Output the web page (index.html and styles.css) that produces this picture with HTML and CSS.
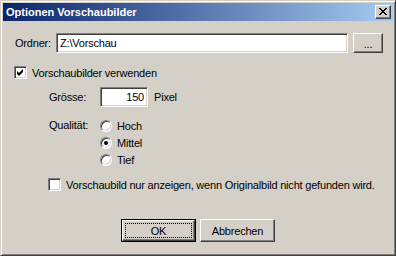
FILE: index.html
```html
<!DOCTYPE html>
<html lang="de">
<head>
    <meta charset="UTF-8">
    <title>Optionen Vorschaubilder</title>
    <link rel="stylesheet" href="styles.css">
</head>
<body>

    <div class="window">
        <div class="titlebar">
            <span class="title">Optionen Vorschaubilder</span>
            <div class="close">
                <svg width="8" height="7" viewBox="0 0 8 7">
                    <path d="M0 0h2v1h1v1h2v-1h1v-1h2v1h-1v1h-1v1h-1v1h1v1h1v1h1v1h-2v-1h-1v-1h-2v1h-1v1h-2v-1h1v-1h1v-1h1v-1h-1v-1h-1v-1h-1z" fill="#000"/>
                </svg>
            </div>
        </div>

        <div class="content">
            <div class="folder-row">
                <span class="label">Ordner:</span>
                <div class="field folder">Z:\Vorschau</div>
                <div class="btn browse">...</div>
            </div>

            <div class="check-row first">
                <span class="checkbox">
                    <svg width="7" height="7" viewBox="0 0 7 7">
                        <path d="M6 0v3l-4 4l-2-2v-3l2 2z" fill="#000"/>
                    </svg>
                </span>
                <span>Vorschaubilder verwenden</span>
            </div>

            <div class="options">
                <div class="size-row">
                    <span class="label sub">Grösse:</span>
                    <div class="field num">150</div>
                    <span class="unit">Pixel</span>
                </div>

                <div class="quality">
                    <span class="label sub">Qualität:</span>
                    <div class="radios">
                        <div class="radio-row"><span class="radio"></span>Hoch</div>
                        <div class="radio-row"><span class="radio on"></span>Mittel</div>
                        <div class="radio-row"><span class="radio"></span>Tief</div>
                    </div>
                </div>

                <div class="check-row second">
                    <span class="checkbox"></span>
                    <span>Vorschaubild nur anzeigen, wenn Originalbild nicht gefunden wird.</span>
                </div>
            </div>

            <div class="buttons">
                <div class="default-frame">
                    <div class="btn ok"><span class="focus">OK</span></div>
                </div>
                <div class="btn cancel">Abbrechen</div>
            </div>
        </div>
    </div>

</body>
</html>
```

FILE: styles.css
```css
body {
    margin: 0;
    background: #d4d0c8;
    font-family: "Liberation Sans", Arial, sans-serif;
    font-size: 11px;
    letter-spacing: -0.2px;
    color: #000;
}

.window {
    width: 396px;
    height: 256px;
    box-sizing: border-box;
    border: 1px solid;
    border-color: #d4d0c8 #404040 #404040 #d4d0c8;
    box-shadow: inset 1px 1px #fff, inset -1px -1px #808080;
    padding: 2px;
    background: #d4d0c8;
}

.titlebar {
    height: 18px;
    display: flex;
    align-items: center;
    justify-content: space-between;
    background: linear-gradient(to right, #0a246a, #a6caf0);
    padding: 0 2px 0 3px;
}

.title {
    color: #fff;
    font-weight: bold;
    font-size: 11px;
    letter-spacing: 0;
}

.close {
    width: 16px;
    height: 14px;
    box-sizing: border-box;
    background: #d4d0c8;
    border: 1px solid;
    border-color: #fff #404040 #404040 #fff;
    box-shadow: inset -1px -1px #808080;
    display: flex;
    align-items: center;
    justify-content: center;
    padding: 0 1px 1px 0;
}

.content {
    padding: 12px 0 0 11px;
}

.folder-row {
    display: flex;
    align-items: center;
    height: 20px;
}

.folder-row .label {
    width: 42px;
    padding-left: 1px;
    box-sizing: border-box;
}

.field {
    height: 20px;
    box-sizing: border-box;
    background: #fff;
    border: 1px solid;
    border-color: #808080 #fff #fff #808080;
    box-shadow: inset 1px 1px #404040, inset -1px -1px #d4d0c8;
    display: flex;
    align-items: center;
}

.field.folder {
    width: 292px;
    padding-left: 3px;
}

.btn {
    height: 20px;
    box-sizing: border-box;
    background: #d4d0c8;
    border: 1px solid;
    border-color: #fff #404040 #404040 #fff;
    box-shadow: inset -1px -1px #808080;
    display: flex;
    align-items: center;
    justify-content: center;
}

.browse {
    width: 30px;
    margin-left: 5px;
    padding-top: 2px;
}

.check-row {
    display: flex;
    align-items: center;
    height: 13px;
}

.check-row.first {
    margin-top: 13px;
}

.checkbox {
    width: 13px;
    height: 13px;
    box-sizing: border-box;
    background: #fff;
    border: 1px solid;
    border-color: #808080 #fff #fff #808080;
    box-shadow: inset 1px 1px #404040, inset -1px -1px #d4d0c8;
    display: flex;
    align-items: center;
    justify-content: center;
    margin-right: 5px;
    flex: none;
}

.options {
    padding-left: 34px;
}

.label.sub {
    width: 52px;
    padding-left: 1px;
    box-sizing: border-box;
}

.size-row {
    display: flex;
    align-items: center;
    margin-top: 8px;
}

.field.num {
    width: 48px;
    justify-content: flex-end;
    padding-right: 3px;
}

.unit {
    margin-left: 6px;
}

.quality {
    display: flex;
    margin-top: 10px;
}

.quality .label {
    height: 17px;
    line-height: 17px;
}

.radio-row {
    display: flex;
    align-items: center;
    height: 17px;
}

.radio {
    width: 12px;
    height: 12px;
    box-sizing: border-box;
    border-radius: 50%;
    background: #fff;
    border: 1px solid;
    border-color: #808080 #fff #fff #808080;
    box-shadow: inset 1px 1px #404040, inset -1px -1px #d4d0c8;
    margin-right: 5px;
    display: flex;
    align-items: center;
    justify-content: center;
}

.radio.on::after {
    content: "";
    width: 4px;
    height: 4px;
    border-radius: 50%;
    background: #000;
}

.check-row.second {
    margin-top: 10px;
}

.buttons {
    display: flex;
    justify-content: center;
    gap: 4px;
    margin-top: 28px;
    margin-left: -11px;
}

.default-frame {
    border: 1px solid #000;
}

.btn.ok {
    width: 73px;
    height: 21px;
    padding: 3px;
}

.focus {
    flex: 1;
    align-self: stretch;
    display: flex;
    align-items: center;
    justify-content: center;
    outline: 1px dotted #000;
}

.btn.cancel {
    width: 75px;
    height: 23px;
}
```
